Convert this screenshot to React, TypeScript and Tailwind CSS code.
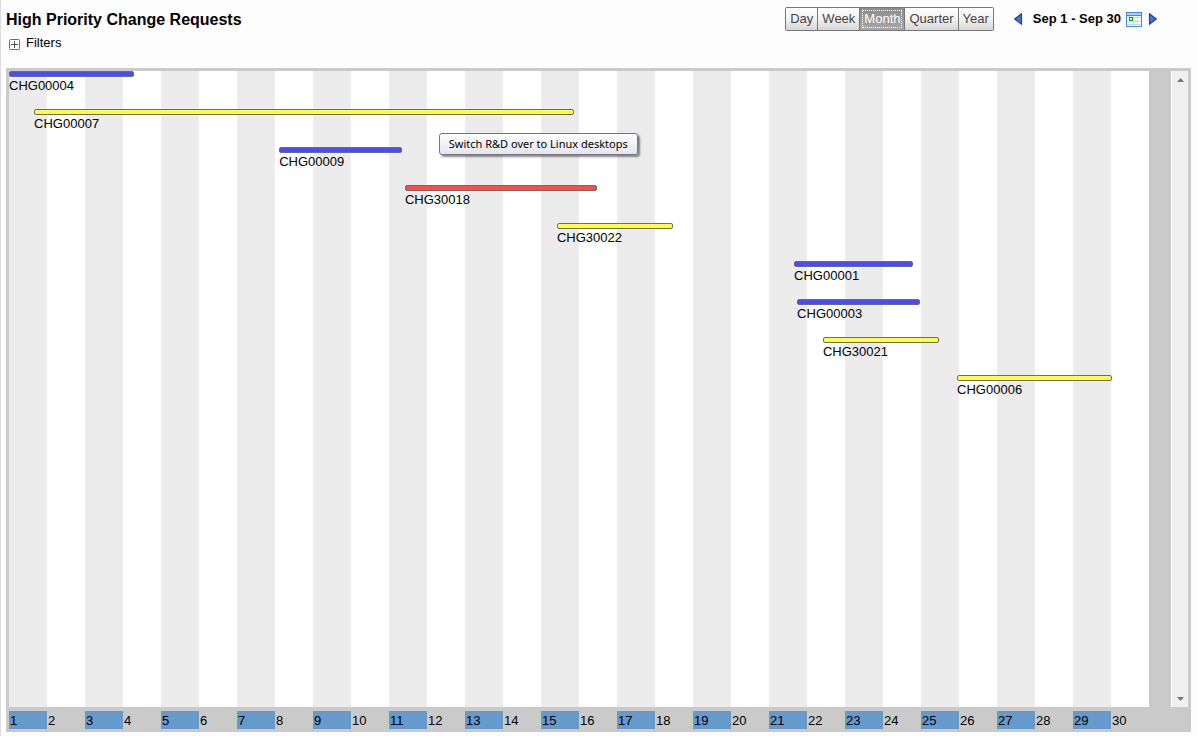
import { useState } from "react";

type Change = { id: string; start: number; end: number; color: string };

// start and end are offsets in days from the first of the month
const changes: Change[] = [
  { id: "CHG00004", start: 0, end: 3.29, color: "bg-[#4a4aff]" },
  { id: "CHG00007", start: 0.66, end: 14.87, color: "bg-[#ffff4a]" },
  { id: "CHG00009", start: 7.11, end: 10.34, color: "bg-[#4a4aff]" },
  { id: "CHG30018", start: 10.42, end: 15.47, color: "bg-[#ff4a4a]" },
  { id: "CHG30022", start: 14.42, end: 17.47, color: "bg-[#ffff4a]" },
  { id: "CHG00001", start: 20.66, end: 23.79, color: "bg-[#4a4aff]" },
  { id: "CHG00003", start: 20.74, end: 23.97, color: "bg-[#4a4aff]" },
  { id: "CHG30021", start: 21.42, end: 24.47, color: "bg-[#ffff4a]" },
  { id: "CHG00006", start: 24.95, end: 29.03, color: "bg-[#ffff4a]" },
];

const DAYS = 30;
const days = Array.from({ length: DAYS }, (_, i) => i + 1);
const ranges = ["Day", "Week", "Month", "Quarter", "Year"];
const percent = (value: number) => `${(value / DAYS) * 100}%`;

function RangePicker() {
  const [range, setRange] = useState("Month");
  return (
    <div className="flex h-6 rounded-xs border border-[#777] divide-x divide-[#777]">
      {ranges.map((name) => (
        <button
          key={name}
          type="button"
          aria-pressed={name === range}
          onClick={() => setRange(name)}
          className={
            name === range
              ? "bg-linear-to-b from-[#8c8c8c] to-[#a8a8a8] p-0.5 text-white"
              : "bg-linear-to-b from-white via-[#f2f2f2] to-[#d6d6d6] p-0.5 text-[#444]"
          }
        >
          <span
            className={
              name === range
                ? "flex h-full items-center border border-dotted border-white px-px"
                : "flex h-full items-center px-0.5"
            }
          >
            {name}
          </span>
        </button>
      ))}
    </div>
  );
}

function CalendarIcon() {
  return (
    <svg width="16" height="15" viewBox="0 0 16 15" shapeRendering="crispEdges">
      <rect width="16" height="15" rx="1" fill="#4a86dc" />
      <rect x="1" y="1" width="14" height="2" fill="#a9d0f5" />
      <rect x="1" y="4" width="14" height="10" fill="#fff" />
      <path d="M3.5 4v10M7.5 4v10M11.5 4v10M1 5.5h14M1 9.5h14M1 12.5h14" stroke="#c3dcf2" />
      <rect x="3" y="5" width="4" height="4" fill="#16a016" />
      <rect x="4" y="6" width="2" height="2" fill="#d9f7d0" />
    </svg>
  );
}

function Header() {
  return (
    <header className="flex items-start justify-between pt-[7px] pr-10 pl-[5px]">
      <div>
        <h1 className="text-[16px] leading-[26px] font-bold">High Priority Change Requests</h1>
        <button type="button" className="flex items-center gap-1.5 pl-[3px] leading-5">
          <svg width="11" height="11" viewBox="0 0 11 11" className="mt-0.5">
            <rect x="0.5" y="0.5" width="10" height="10" rx="1" fill="#fff" stroke="#5a7388" />
            <path d="M2 5.5h7M5.5 2v7" stroke="#3b5a70" />
          </svg>
          Filters
        </button>
      </div>
      <div className="flex items-center">
        <RangePicker />
        <button type="button" aria-label="Previous month" className="ml-5">
          <svg width="9" height="12" viewBox="0 0 9 12">
            <path d="M7.5 0.8v10.4L0.8 6z" fill="#2f7fc8" stroke="#3434a8" strokeWidth="1.2" />
          </svg>
        </button>
        <span className="ml-2.5 font-bold">Sep 1 - Sep 30</span>
        <button type="button" aria-label="Choose date" className="ml-[5px]">
          <CalendarIcon />
        </button>
        <button type="button" aria-label="Next month" className="ml-1.5">
          <svg width="9" height="12" viewBox="0 0 9 12">
            <path d="M1.5 0.8v10.4L8.2 6z" fill="#2f7fc8" stroke="#3434a8" strokeWidth="1.2" />
          </svg>
        </button>
      </div>
    </header>
  );
}

function Timeline() {
  return (
    <div className="relative flex-1">
      <div className="absolute inset-0 grid grid-cols-[repeat(30,minmax(0,1fr))]">
        {days.map((day) => (
          <div key={day} className="odd:bg-[#ececec] even:bg-white" />
        ))}
      </div>
      <ul className="relative">
        {changes.map((change) => (
          <li key={change.id} className="h-[38px]" style={{ paddingLeft: percent(change.start) }}>
            <div
              className={`h-1.5 rounded-xs border border-[#6c6c6c] ${change.color}`}
              style={{ width: `${((change.end - change.start) / (DAYS - change.start)) * 100}%` }}
            />
            <a href={`#${change.id}`} className="block leading-[18px]">
              {change.id}
            </a>
          </li>
        ))}
      </ul>
      <div
        role="tooltip"
        className="absolute top-[62px] left-[37.7%] rounded-[3px] border border-[#767676] bg-linear-to-b from-white to-[#e4e5f0] px-[9px] font-['Noto_Sans',sans-serif] text-[11px] leading-5 whitespace-nowrap shadow-[2px_2px_2px_rgba(0,0,0,0.45)]"
      >
        Switch R&amp;D over to Linux desktops
      </div>
    </div>
  );
}

function Scrollbar() {
  return (
    <div className="flex w-[17px] flex-col justify-between border-l border-white bg-[#f0f0f0]">
      <button type="button" aria-label="Scroll up" className="flex h-[17px] items-center justify-center">
        <svg width="7" height="4" viewBox="0 0 7 4">
          <path d="M0 4L3.5 0L7 4z" fill="#777" />
        </svg>
      </button>
      <button type="button" aria-label="Scroll down" className="flex h-[17px] items-center justify-center">
        <svg width="7" height="4" viewBox="0 0 7 4">
          <path d="M0 0L3.5 4L7 0z" fill="#777" />
        </svg>
      </button>
    </div>
  );
}

export default function App() {
  return (
    <div className="flex min-h-screen flex-col border-l border-[#dcdcdc] bg-[#fdfdfd] pb-1 font-['Liberation_Sans',Arial,sans-serif] text-[13px] text-black">
      <Header />
      <main className="mt-[15px] mr-1.5 ml-[5px] flex flex-1 flex-col border-[3px] border-[#cacaca] bg-[#cacaca]">
        <div className="flex flex-1">
          <Timeline />
          <div className="w-[22px]" />
          <Scrollbar />
        </div>
        <div className="mt-1 mr-[39px] grid grid-cols-[repeat(30,minmax(0,1fr))]">
          {days.map((day) => (
            <div key={day} className="pt-0.5 pl-px leading-4 odd:bg-[#6699cc]">
              {day}
            </div>
          ))}
        </div>
      </main>
    </div>
  );
}
